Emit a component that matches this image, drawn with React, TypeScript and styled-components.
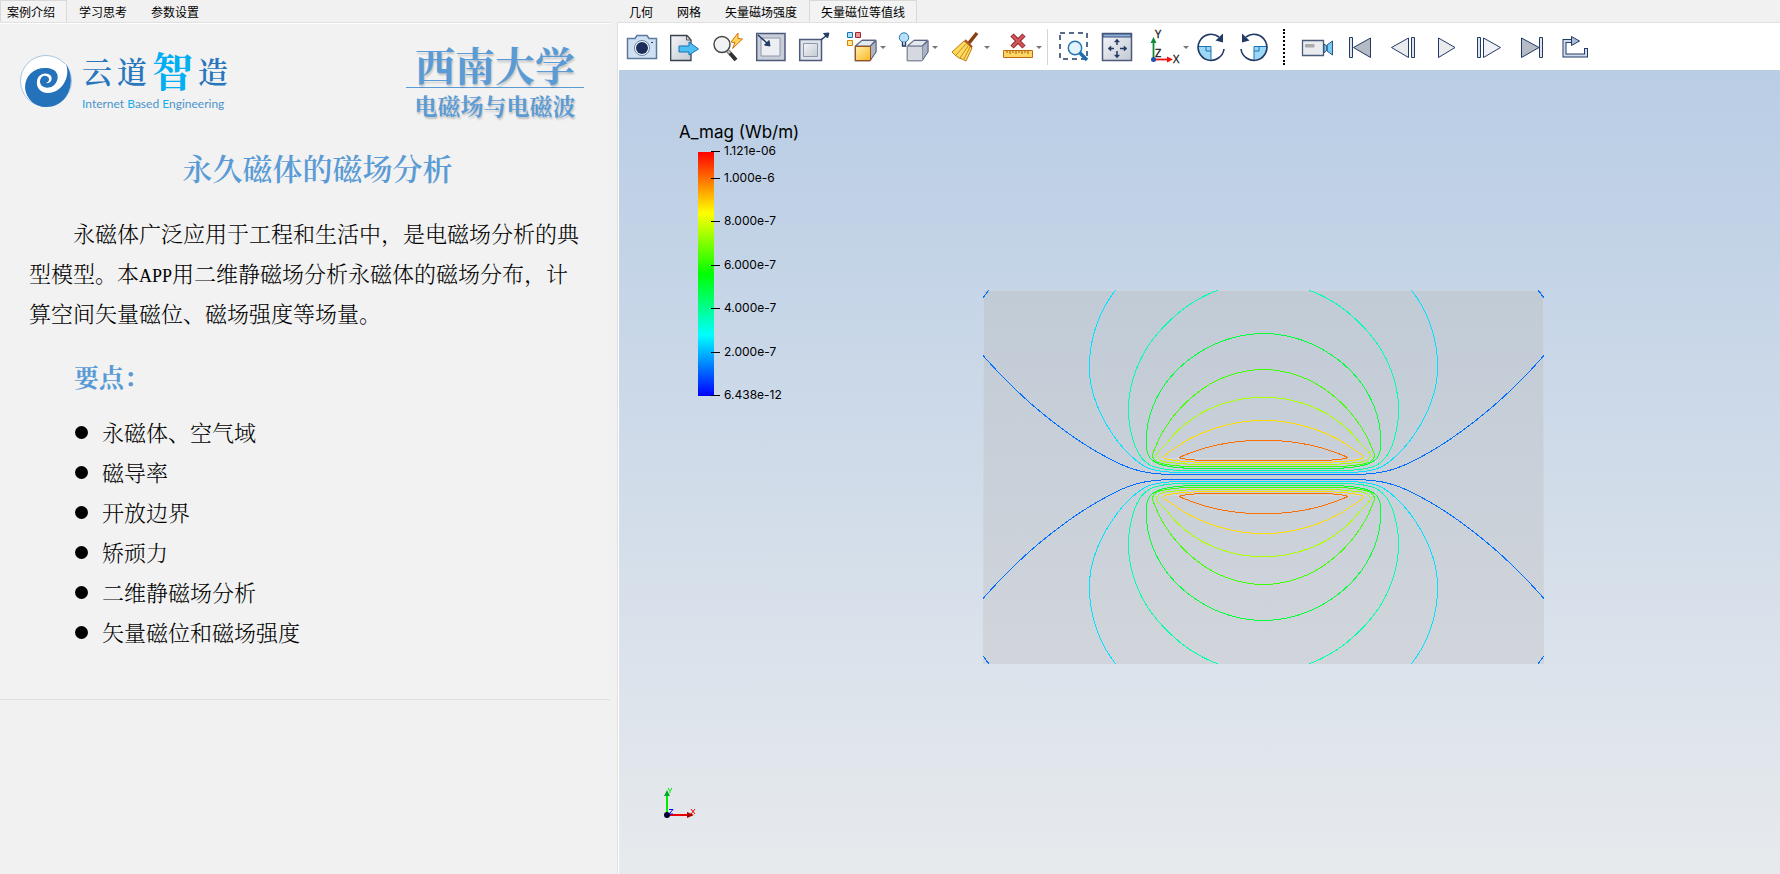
import React from 'react';
import styled, { createGlobalStyle } from 'styled-components';

const GlobalStyle = createGlobalStyle`
  * { box-sizing: border-box; }
  body { margin: 0; background: #f1f1f1; color: #000; font-family: "Liberation Sans", "Noto Sans CJK SC", sans-serif; }
`;

const serif = '"Noto Serif CJK SC", "Noto Sans CJK SC", serif';

const Shell = styled.div`
  display: grid;
  grid-template-columns: 610fr 7px 1163fr;
  min-height: 100vh;
`;

const Pane = styled.section`
  display: flex;
  flex-direction: column;
  grid-column: ${(p: { $column: number }) => p.$column};
  min-width: 0;
`;

const TabBar = styled.div`
  display: flex;
  height: 22px;
`;

const Tab = styled.button<{ $active?: boolean; $first?: boolean }>`
  height: 22px;
  padding: 1px 11px 1px ${(p) => (p.$first ? '6px' : '11px')};
  border: 1px solid ${(p) => (p.$active ? '#d9d9d9' : 'transparent')};
  border-bottom: 0;
  background: ${(p) => (p.$active ? '#f3f3f3' : 'transparent')};
  color: #000;
  font: 12px/18px "Noto Sans CJK SC", sans-serif;
  white-space: nowrap;
`;

const Page = styled.article`
  padding: 0 0 47px 29px;
  border: solid #e0e0e0;
  border-width: 1px 0;
  background: #f2f2f2;
  box-shadow: inset 0 1px #fff;
`;

const Brands = styled.header`
  display: flex;
  justify-content: space-between;
  margin-left: -10px;
  padding: 20px 26px 0 0;
  height: 120px;
`;

const Brand = styled.div`
  display: flex;
  gap: 9px;
  padding-top: 2px;
`;

const Swirl = styled.svg`
  width: 54px;
  height: 54px;
  margin-top: 9px;
`;

const BrandName = styled.div`
  display: flex;
  align-items: center;
  gap: 5px;
  height: 50px;
  font: 600 30px/50px ${serif};
  color: #2877bd;
`;

const BrandScript = styled.span`
  color: #00aef3;
  font-size: 41px;
  font-weight: 700;
`;

const Slogan = styled.div`
  font: 12px/18px Lato, sans-serif;
  color: #4c92cb;
  white-space: nowrap;
  b { font-weight: 400; color: #14b0f2; }
`;

const School = styled.div`
  width: 178px;
  color: #5b9bd5;
  text-align: center;
  text-shadow: 1px 2px 2px #0003;
`;

const SchoolName = styled.div`
  height: 45px;
  border-bottom: 1px solid #5b9bd5;
  font: 700 40px/42px ${serif};
`;

const Course = styled.div`
  font: 700 23px/36px ${serif};
`;

const Title = styled.h1`
  margin: 2px 0 24px;
  padding-right: 4px;
  color: #5b9bd5;
  font: 600 30px/44px ${serif};
  text-align: center;
`;

const Intro = styled.p`
  margin: 0;
  font: 300 22px/40px ${serif};
  text-indent: 44px;
  white-space: nowrap;
`;

const Latin = styled.span`
  font: 18px/20px "Liberation Serif", serif;
`;

const Subtitle = styled.h2`
  margin: 23px 0 16px 45px;
  color: #5b9bd5;
  font: 700 25px/40px ${serif};
`;

const Points = styled.ul`
  margin: 0 0 0 46px;
  padding: 0;
  list-style: none;
`;

const Point = styled.li`
  display: flex;
  align-items: center;
  gap: 14px;
  font: 300 22px/40px ${serif};
  &::before { content: ''; width: 13px; height: 13px; border-radius: 50%; background: #000; }
`;

const Work = styled.div`
  display: flex;
  flex: 1;
  flex-direction: column;
  border: 1px solid #e0e0e0;
  border-width: 1px 0 0 1px;
  padding-left: 1px;
  background: #fff;
`;

const Toolbar = styled.div`
  display: flex;
  align-items: center;
  height: 47px;
  padding: 1px 0 0 1px;
`;

const Tool = styled.button<{ $menu?: boolean }>`
  display: flex;
  align-items: center;
  flex: none;
  width: ${(p) => (p.$menu ? '52px' : '43px')};
  height: 40px;
  padding: 0 0 0 ${(p) => (p.$menu ? '12px' : '7px')};
  border: 0;
  background: none;
  svg { flex: none; overflow: visible; }
`;

const Caret = styled.span`
  margin-left: 3px;
  border: solid transparent;
  border-width: 3px 3px 0;
  border-top-color: #777;
`;

const Rule = styled.span`
  width: 9px;
  height: 36px;
  border-left: 1px solid #d5d5d5;
  margin-left: 4px;
  margin-right: -4px;
`;

const Dots = styled.span`
  width: 12px;
  height: 36px;
  margin-left: 7px;
  border-left: 2px dotted #000;
`;

const View = styled.div`
  display: grid;
  flex: 1;
  grid-template-columns: 364fr 561fr 236fr;
  background: linear-gradient(#b9cde5, #e7eaed);
`;

const Side = styled.div`
  display: flex;
  flex-direction: column;
  justify-content: space-between;
  padding: 51px 0 44px 37px;
`;

const Legend = styled.figure`
  margin: 0;
  padding-left: 23px;
`;

const LegendTitle = styled.figcaption`
  font: 17px/22px Inter, sans-serif;
  white-space: nowrap;
`;

const Scale = styled.svg`
  display: block;
  margin: 1px 0 0 19px;
  overflow: visible;
  font: 12px Inter, sans-serif;
`;

const Field = styled.svg`
  width: 100%;
  margin-top: 220px;
`;

const NAVY = '#223a66';

const Icon = ({ children }: { children: React.ReactNode }) => (
  <svg width="30" height="30" viewBox="0 0 30 30" fill="none" stroke={NAVY} aria-hidden="true">{children}</svg>
);

const Cube = ({ front, edge, side }: { front: string; edge: string; side: string }) => (
  <>
    <path d="M8 14L15 8H29V20L23 29H8Z" fill={side} stroke={side} />
    <path d="M9 14L15 8.500H28L23 14Z" fill="#e4e9f1" stroke="#5b6680" />
    <path d="M23.500 14L29 9V20L23.500 28Z" fill="#a9b4c6" stroke="#5b6680" />
    <path d="M8.500 14.500H23.500V28.500H8.500Z" fill={front} stroke={edge} />
  </>
);

const Glyphs = {
  camera: <Icon><path d="M.5 6.500H8L10 3.500H20L22 6.500H29.500V26.500H.5Z" fill="#cfe0f3" stroke="#5c789f" strokeWidth="1.500" /><circle cx="15" cy="16" r="7.500" fill="#fff" stroke="#6682aa" /><circle cx="15" cy="16" r="6" fill="#1c2f5c" stroke="none" /><path d="M24 10.500H26" /></Icon>,
  export: <Icon><path d="M.7 3.500H17L21 8V28.500H.7Z" fill="url(#steel)" stroke="#39404c" strokeWidth="1.300" /><path d="M16.500 4V8H21" stroke="#555" /><path d="M9 14H19V10L28.500 17L19 23V20H9Z" fill="#4fc0f3" stroke="#1673b5" /></Icon>,
  probe: <Icon><circle cx="9" cy="12.500" r="8" fill="#f0f2f4" stroke="#444" strokeWidth="1.400" /><path d="M15 19L23 28" stroke="#333" strokeWidth="4" /><path d="M15 19L17 21" stroke="#bbb" strokeWidth="3" /><path d="M25 1L18 10L22 10.500L19.500 16.500L29.500 7L25 6.500Z" fill="#ffd75a" stroke="#d5700e" /></Icon>,
  fit: <Icon><path d="M.7 1.500H29V28.500H.7Z" fill="#c9ced8" stroke="#4c5a7b" strokeWidth="1.500" /><path d="M5 6H24V24H5Z" fill="#eceef2" stroke="#8e98ac" /><path d="M2 3L12 12" strokeWidth="1.500" /><path d="M14 14L8.500 13L13 8.500Z" fill={NAVY} /></Icon>,
  expand: <Icon><path d="M.7 7.500H22.500V28.500H.7Z" fill="#dfe3ea" stroke="#4c5a7b" strokeWidth="1.500" /><path d="M4.500 11.500H18.500V24.500H4.500Z" fill="url(#steel)" stroke="#8e98ac" /><path d="M22 8L28 3" strokeWidth="1.500" /><path d="M30 1L24.500 1.500L28.500 6Z" fill={NAVY} /></Icon>,
  cubes: <Icon><path d="M.5.5H5.500V5.500H.5Z" fill="#a9e2fa" stroke="#1976ac" /><path d="M8.500.5H13.500V5.500H8.500Z" fill="#e89a9a" stroke="#9e2a30" /><path d="M.5 8.500H5.500V13.500H.5Z" fill="#ffe790" stroke="#d98300" /><Cube front="url(#gold)" edge="#a34e14" side="#667289" /></Icon>,
  bulb: <Icon><Cube front="#d5d9df" edge="#8b93a2" side="#8b93a2" /><circle cx="5" cy="5.500" r="4.700" fill="#b7e1fa" stroke="#2675af" /><path d="M3.500 10V14H6.500V10" fill="#dce3ea" strokeWidth="1.400" /></Icon>,
  broom: <Icon><path d="M26 1L18 11" stroke="#8a3e12" strokeWidth="3.500" /><path d="M13 9L21 16L15 29L11 27L8 26L4 23L1 20Z" fill="#ffdb5d" stroke="#bf7a12" /><path d="M15 12L5 23M17 14L9 26M19 15L13 27" stroke="#c98a1c" /><path d="M14 8L21 15" stroke="#a9501d" strokeWidth="2" /></Icon>,
  ruler: <Icon><path d="M.5 18.500H29.500V25.500H.5Z" fill="#ffd563" stroke="#be6a13" /><path d="M4 19V21M7 19V22M10 19V21M13 19V22M16 19V21M19 19V22M22 19V21M25 19V22" stroke="#9c5a12" /><path d="M9 3L21 15M21 3L9 15" stroke="#8f2429" strokeWidth="4.500" /><path d="M9.500 3.500L20.500 14.500M20.500 3.500L9.500 14.500" stroke="#d2565a" strokeWidth="2.500" /></Icon>,
  zoomBox: <Icon><path d="M1 1H28V27H1Z" strokeWidth="1.500" strokeDasharray="5 4" /><path d="M20 20L28 28" stroke="#1c6dad" strokeWidth="3.500" /><circle cx="16" cy="16" r="6.700" fill="#e3f3fc" stroke="#2577b3" strokeWidth="1.500" /></Icon>,
  pan: <Icon><path d="M.5 1.500H29.500V28.500H.5Z" fill="url(#steel)" stroke="#4c5a7b" strokeWidth="1.500" /><path d="M1 2H29V5H1Z" fill="#8fb0d2" stroke="#35507c" /><path d="M15 13V8M15 19V25M12 16.500H7M18 16.500H24" strokeWidth="1.500" /><path d="M15 7L12.500 10H17.500ZM15 26L12.500 23H17.500ZM6 16.500L9 14V19ZM25 16.500L22 14V19Z" fill={NAVY} stroke={NAVY} strokeWidth=".5" /></Icon>,
  axes: <Icon><path d="M3.500 26V9" stroke="#128a3c" strokeWidth="1.800" /><path d="M3.500 5L.5 11H6.500Z" fill="#128a3c" stroke="none" /><path d="M4 27.500H18" stroke="#e11" strokeWidth="1.800" /><path d="M23 27.500L17 24.500V30.500Z" fill="#e11" stroke="none" /><circle cx="3.500" cy="27.500" r="2.500" fill="#2150ad" stroke="none" /><g fill="#222" stroke="#222" strokeWidth=".3" fontFamily="Open Sans, sans-serif" fontSize="11"><text x="5" y="6">Y</text><text x="5" y="25">Z</text><text x="23" y="31">X</text></g></Icon>,
  turnRight: <Icon><path d="M.7 14.500H14V28Q2 26 .7 14.500" fill="#9bd8f8" stroke="none" /><path d="M1 14.500H14V27.500M9 15V19H14" stroke="#1974b0" /><path d="M27 17A13 13 0 1 1 22 5" strokeWidth="1.600" /><path d="M26 1.500V10.500L18.500 8.500Z" fill={NAVY} stroke="none" /></Icon>,
  turnLeft: <Icon><path d="M27.300 14.500H14V28Q26 26 27.300 14.500" fill="#9bd8f8" stroke="none" /><path d="M27 14.500H14V27.500M19 15V19H14" stroke="#1974b0" /><path d="M1 17A13 13 0 1 0 6 5" strokeWidth="1.600" /><path d="M2 1.500V10.500L9.500 8.500Z" fill={NAVY} stroke="none" /></Icon>,
  video: <Icon><path d="M.5 8.500H21.500V23.500H.5Z" fill="#e9ebef" stroke="#4c5a7b" strokeWidth="1.300" /><path d="M3.500 12.500H12V15H3.500Z" fill="#aaa" stroke="#aaa" /><path d="M22 12L25 14V18L22 21ZM30.500 9V23L25 19V13Z" fill="#74cdf4" stroke="#34507a" /></Icon>,
  first: <Icon><path d="M4.500 5.500H7.500V25.500H4.500Z" fill="#dfe3ea" /><path d="M25.500 6V25.500L8.500 15.500Z" fill="#b5bac4" /></Icon>,
  back: <Icon><path d="M20.500 6V25.500L3.500 15.500Z" fill="#e9ebef" /><path d="M23.500 5.500H26.500V25.500H23.500Z" fill="#dfe3ea" /></Icon>,
  play: <Icon><path d="M7.500 6L24 15.500L7.500 25.500Z" fill="#e9ebef" /></Icon>,
  forward: <Icon><path d="M3.500 5.500H6.500V25.500H3.500Z" fill="#dfe3ea" /><path d="M9.500 6L26.500 15.500L9.500 25.500Z" fill="#f0f1f4" /></Icon>,
  last: <Icon><path d="M4.500 6L22 15.500L4.500 25.500Z" fill="#b5bac4" /><path d="M22.500 5.500H25.500V25.500H22.500Z" fill="#dfe3ea" /></Icon>,
  loop: <Icon><path d="M12 9H4.500V23.500H26V16" strokeWidth="4" /><path d="M12 9H4.500V23.500H26V17" stroke="#cfdcec" strokeWidth="2" /><path d="M11.500 4.500L19.500 9L11.500 13.500Z" fill="#a9bed8" /></Icon>,
};

type ToolItem = { icon: keyof typeof Glyphs; label: string; menu?: boolean };
const viewTools: ToolItem[] = [
  { icon: 'camera', label: '截图' },
  { icon: 'export', label: '导出' },
  { icon: 'probe', label: '探测' },
  { icon: 'fit', label: '适应窗口' },
  { icon: 'expand', label: '放大窗口' },
  { icon: 'cubes', label: '显示', menu: true },
  { icon: 'bulb', label: '光照', menu: true },
  { icon: 'broom', label: '清除', menu: true },
  { icon: 'ruler', label: '删除标尺', menu: true },
];
const cameraTools: ToolItem[] = [
  { icon: 'zoomBox', label: '框选缩放' },
  { icon: 'pan', label: '平移' },
  { icon: 'axes', label: '视角', menu: true },
  { icon: 'turnRight', label: '顺时针旋转' },
  { icon: 'turnLeft', label: '逆时针旋转' },
];
const playTools: ToolItem[] = [
  { icon: 'video', label: '录像' },
  { icon: 'first', label: '第一帧' },
  { icon: 'back', label: '上一帧' },
  { icon: 'play', label: '播放' },
  { icon: 'forward', label: '下一帧' },
  { icon: 'last', label: '最后一帧' },
  { icon: 'loop', label: '循环' },
];

const Tools = ({ items }: { items: ToolItem[] }) => (
  <>
    {items.map((t) => (
      <Tool key={t.icon} type="button" aria-label={t.label} $menu={t.menu}>
        {Glyphs[t.icon]}
        {t.menu && <Caret />}
      </Tool>
    ))}
  </>
);

const ticks: [number, string][] = [
  [0, '1.121e-06'], [27, '1.000e-6'], [70, '8.000e-7'], [114, '6.000e-7'],
  [157, '4.000e-7'], [201, '2.000e-7'], [244, '6.438e-12'],
];

/*
 * Contour lines of the upper half plane, up to the axis x = 280.5; the right half
 * is the mirror image. Closed lines begin at their apex, which lies on the axis.
 */
type P = [number, number];
const AXIS = 280.5;
const contours: { color: string; closed?: boolean; points: P[] }[] = [
  { color: '#006eff', points: [[0, 65.5], [17, 84], [32, 99], [50, 115.5], [67, 129.5], [87, 144.5], [107, 157.7], [127, 169], [143, 176.5], [159, 181.5], [178, 184], [200, 184.5], [215, 184.5], [AXIS, 184.5]] },
  { color: '#00e0ff', points: [[132.5, 0], [122, 16], [115, 31], [109.5, 49], [106.8, 67], [106.8, 86], [109.5, 101.5], [114, 115], [120.5, 129.3], [129, 143.3], [139, 156.7], [152, 169.5], [162, 176.5], [169, 179.3], [179, 181.3], [200, 182.5], [215, 182.5], [AXIS, 182.5]] },
  { color: '#00ffaa', points: [[235, 0], [222, 5.7], [206, 15], [188, 29.5], [174, 44.3], [162, 61], [153.7, 78.3], [149, 92.7], [146.3, 106.7], [145.3, 118.3], [146, 130], [148.3, 143.3], [153, 158.3], [158.7, 168], [167, 175], [178, 178.5], [200, 180.5], [215, 180.5], [AXIS, 180.5]] },
  { color: '#00ff37', closed: true, points: [[AXIS, 43.5], [263.7, 44.8], [247, 48.5], [230, 55], [214, 64], [200, 74.5], [188, 86.5], [177.5, 101], [169.7, 117], [165, 133.3], [163.4, 148.3], [164, 161], [167, 168], [173.7, 173], [187, 176.5], [210, 178.5], [225, 178.5], [AXIS, 178.5]] },
  { color: '#3cff00', closed: true, points: [[AXIS, 79.5], [263.7, 81], [246, 85.5], [229, 93], [214, 103], [200.5, 115], [188.7, 128.5], [179, 143.3], [172, 158.3], [169.5, 166.5], [173, 171.3], [184, 174.5], [210, 176.5], [225, 176.5], [AXIS, 176.5]] },
  { color: '#aaff00', closed: true, points: [[AXIS, 107.5], [262, 108.5], [244, 112.5], [227, 118.7], [210.5, 128], [196, 139.5], [184, 153], [174, 167], [177, 170], [192, 173], [217, 174.5], [232, 174.5], [AXIS, 174.5]] },
  { color: '#ffdc00', closed: true, points: [[AXIS, 130.5], [262, 131.5], [243.7, 135], [225.3, 140.7], [207.5, 148.5], [193, 157.5], [181, 168], [187, 169.7], [203, 171.5], [228, 172.5], [240, 172.5], [AXIS, 172.5]] },
  { color: '#ff6e00', closed: true, points: [[AXIS, 150.5], [262, 151], [243.7, 153.2], [226, 157], [210, 162], [197, 168], [206, 169.5], [233, 170.5], [245, 170.5], [AXIS, 170.5]] },
];

const length = (a: P, b: P) => Math.hypot(b[0] - a[0], b[1] - a[1]) || 1;

/* Hermite spline whose tangents are weighted by the length of the neighbouring segments. */
const smooth = (p: P[], closed = false) => {
  const n = p.length;
  const at = (i: number) => (closed ? p[(i + n) % n] : p[Math.max(0, Math.min(n - 1, i))]);
  const tangent = (i: number): P => {
    const [a, b, c] = [at(i - 1), at(i), at(i + 1)];
    const l1 = length(a, b);
    const l2 = length(b, c);
    if (!closed && i === 0) return [(c[0] - b[0]) / l2, (c[1] - b[1]) / l2];
    if (!closed && i === n - 1) return [(b[0] - a[0]) / l1, (b[1] - a[1]) / l1];
    const part = (k: 0 | 1) => (((b[k] - a[k]) / l1) * l2 + ((c[k] - b[k]) / l2) * l1) / (l1 + l2);
    return [part(0), part(1)];
  };
  let d = `M${at(0).join(' ')}`;
  for (let i = 0; i < (closed ? n : n - 1); i += 1) {
    const [s, e] = [at(i), at(i + 1)];
    const [u, v] = [tangent(i), tangent(closed ? (i + 1) % n : i + 1)];
    const h = length(s, e) / 3;
    d += `C${s[0] + u[0] * h} ${s[1] + u[1] * h} ${e[0] - v[0] * h} ${e[1] - v[1] * h} ${e[0]} ${e[1]}`;
  }
  return d;
};

const acrossAxis = (p: P[]): P[] => [
  ...p,
  ...p.filter(([x]) => x < AXIS).reverse().map(([x, y]): P => [2 * AXIS - x, y]),
];

const points = ['永磁体、空气域', '磁导率', '开放边界', '矫顽力', '二维静磁场分析', '矢量磁位和磁场强度'];

export default function App() {
  return (
    <Shell>
      <GlobalStyle />
      <Pane $column={1}>
        <TabBar role="tablist">
          <Tab role="tab" aria-selected $active $first>案例介绍</Tab>
          <Tab role="tab">学习思考</Tab>
          <Tab role="tab">参数设置</Tab>
        </TabBar>
        <Page>
          <Brands>
            <Brand>
              <Swirl viewBox="0 0 54 54" aria-hidden="true">
                <circle cx="27" cy="27" r="25.500" fill="#fff" stroke="#a9c6e2" />
                <path d="M47 10C58 26 50 53 27 53C16 53 7 45 6 34C6 21 15 14 26 14C32 14 36 16 38 19Z" fill="#2472ba" />
                <path d="M47 10C52 24 42 39 29 39C21 39 17 33 18 27C19 20 27 17 32 22C34 26 31 30 27 29C30 28 31 25 29 23C25 20 21 23 21 28C22 34 29 35 34 32C39 28 40 22 37 18L38 12Z" fill="#fff" />
              </Swirl>
              <div>
                <BrandName>
                  <span>云</span><span>道</span><BrandScript>智</BrandScript><span>造</span>
                </BrandName>
                <Slogan><b>I</b>nternet <b>B</b>ased <b>E</b>ngineering</Slogan>
              </div>
            </Brand>
            <School>
              <SchoolName>西南大学</SchoolName>
              <Course>电磁场与电磁波</Course>
            </School>
          </Brands>
          <Title>永久磁体的磁场分析</Title>
          <Intro>
            永磁体广泛应用于工程和生活中，是电磁场分析的典<br />
            型模型。本<Latin>APP</Latin>用二维静磁场分析永磁体的磁场分布，计<br />
            算空间矢量磁位、磁场强度等场量。
          </Intro>
          <Subtitle>要点：</Subtitle>
          <Points>{points.map((t) => <Point key={t}>{t}</Point>)}</Points>
        </Page>
      </Pane>
      <Pane $column={3}>
        <TabBar role="tablist">
          <Tab role="tab">几何</Tab>
          <Tab role="tab">网格</Tab>
          <Tab role="tab">矢量磁场强度</Tab>
          <Tab role="tab" aria-selected $active>矢量磁位等值线</Tab>
        </TabBar>
        <Work>
          <Toolbar role="toolbar">
            <svg width="0" height="0" aria-hidden="true">
              <linearGradient id="steel" x2="1" y2="1"><stop stopColor="#f4f5f8" /><stop offset="1" stopColor="#c3c9d3" /></linearGradient>
              <linearGradient id="gold" x2="1" y2="1"><stop stopColor="#fff0b0" /><stop offset="1" stopColor="#fbb61c" /></linearGradient>
            </svg>
            <Tools items={viewTools} />
            <Rule />
            <Tools items={cameraTools} />
            <Dots />
            <Tools items={playTools} />
          </Toolbar>
          <View>
            <Side>
              <Legend>
                <LegendTitle>A_mag (Wb/m)</LegendTitle>
                <Scale width="90" height="260" viewBox="0 -8 90 260">
                  <linearGradient id="rainbow" x2="0" y2="1">
                    <stop stopColor="#f00" /><stop offset=".25" stopColor="#ff0" /><stop offset=".5" stopColor="#0f0" />
                    <stop offset=".75" stopColor="#0ff" /><stop offset="1" stopColor="#00f" />
                  </linearGradient>
                  <rect width="16" height="244" fill="url(#rainbow)" />
                  {ticks.map(([y, label]) => (
                    <g key={label}>
                      <path d={`M13 ${y - 0.5}H22`} stroke="#000" />
                      <text x="26" y={y + 3}>{label}</text>
                    </g>
                  ))}
                </Scale>
              </Legend>
              <svg width="50" height="42" viewBox="0 0 50 42" aria-label="坐标轴">
                <path d="M11 26V5" stroke="#0e0" strokeWidth="2" />
                <path d="M11 2L8 8H14Z" fill="#0a2" />
                <path d="M12 27H32" stroke="#e00" strokeWidth="2" />
                <path d="M38 27L31 24V30Z" fill="#a00" />
                <circle cx="11" cy="27" r="3" fill="#003" />
                <path d="M12.500 -1V1L14 3L15.500 1V-1M14 3V5" stroke="#0e0" fill="none" />
                <path d="M13 21.500H17L13 26H17" stroke="#00e" fill="none" />
                <path d="M35 21L39 26M39 21L35 26" stroke="#e00" />
              </svg>
            </Side>
            <Field viewBox="0 0 561 374" role="img" aria-label="矢量磁位等值线">
              <linearGradient id="domain" x2="0" y2="1"><stop stopColor="#c1cbd6" /><stop offset="1" stopColor="#d1d5db" /></linearGradient>
              <rect x=".5" y=".5" width="560" height="373" fill="url(#domain)" stroke="#cfd5dc" />
              <path d="M168.500 168.500H392.500V205.500H168.500Z" fill="none" stroke="#d3d8dd" />
              <g fill="none" shapeRendering="crispEdges">
                {['', 'matrix(1 0 0 -1 0 374)'].map((m) => (
                  <g key={m} transform={m}>
                    <path d="M0 8L6 0M561 8L555 0" stroke="#006eff" />
                    {contours.map((c) => (
                      <path key={c.color} d={smooth(acrossAxis(c.points), c.closed)} stroke={c.color} />
                    ))}
                  </g>
                ))}
              </g>
            </Field>
          </View>
        </Work>
      </Pane>
    </Shell>
  );
}
